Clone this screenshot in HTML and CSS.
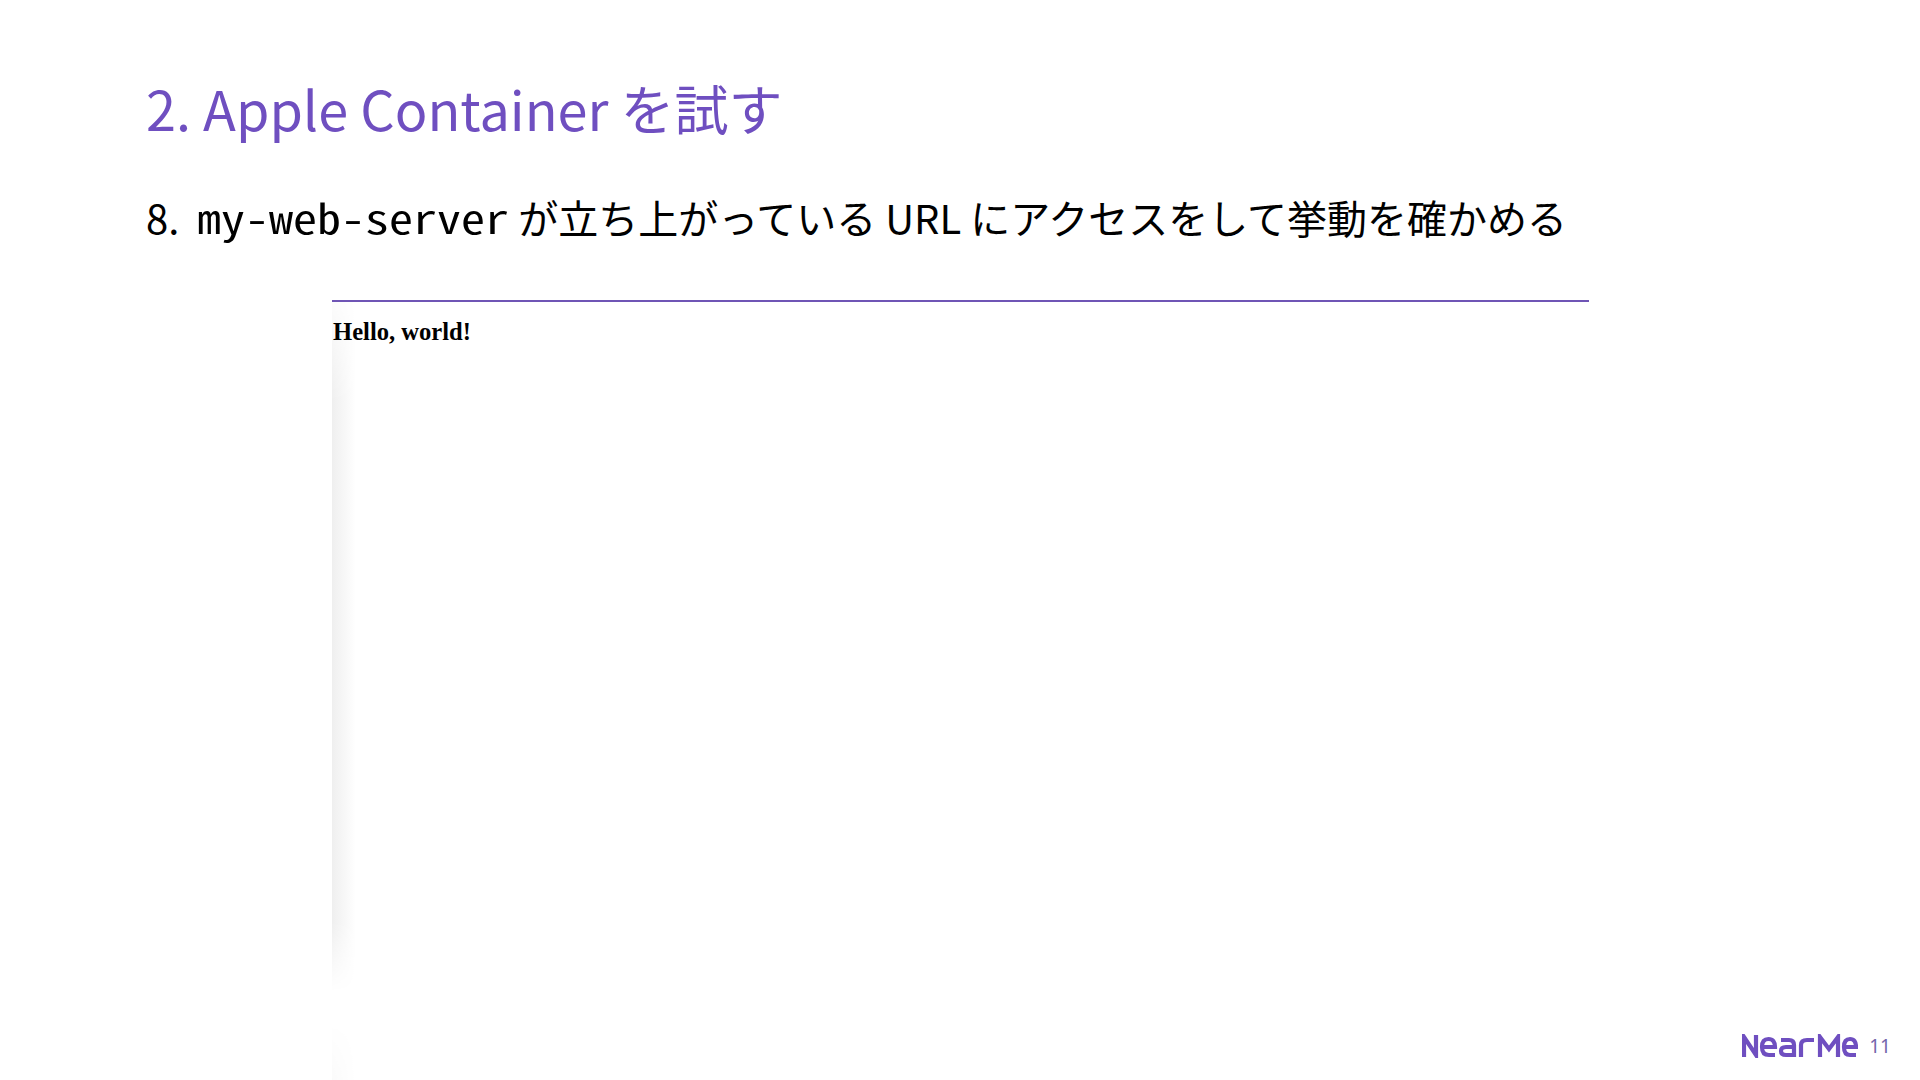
FILE: index.html
```html
<!DOCTYPE html>
<html lang="ja">
<head>
<meta charset="utf-8">
<title>Slide</title>
<link rel="stylesheet" href="styles.css">
</head>
<body>
<main class="slide">
  <h1 class="title">2. Apple Container を試す</h1>
  <p class="step"><span class="num">8.</span><code class="code">my-web-server</code> が立ち上がっている URL にアクセスをして挙動を確かめる</p>
  <section class="shot"><b class="hello">Hello, world!</b></section>
  <footer class="foot">
    <svg class="logo" width="116" height="24" viewBox="0 0 116 24" fill="none" stroke="#6f4fc0" stroke-width="4.200">
      <path d="M2 23V3L14 21V1"/>
      <path d="M20 13H33Q33 5 26.500 5Q20 5 20 13Q20 21 27 21H33"/>
      <path d="M39 6H47Q52 6 52 11V21H44Q39 21 39 17Q39 13 44 13H52"/>
      <path d="M59 23V11Q59 6 65 6H72"/>
      <path d="M78 23V3L87 15L96 3V23"/>
      <path d="M102 13H114Q114 5 108 5Q102 5 102 13Q102 21 108 21H114"/>
    </svg>
    <span class="page">11</span>
  </footer>
</main>
</body>
</html>
```
FILE: styles.css
```css
* { box-sizing: border-box; }
html, body { margin: 0; padding: 0; background: #fff; }
.slide {
  width: 1920px;
  height: 1080px;
  overflow: hidden;
  position: relative;
  padding: 73px 0 0 146px;
  font-family: "Noto Sans CJK JP", "Noto Sans", sans-serif;
}
.title {
  margin: 0;
  font-size: 54px;
  line-height: 70px;
  font-weight: 400;
  color: #6f4fc0;
}
.step {
  margin: 44px 0 0;
  font-size: 40px;
  line-height: 60px;
  color: #000;
  white-space: nowrap;
}
.num { margin-right: 18px; }
.code {
  display: inline-block;
  font-family: "Noto Sans Mono CJK JP", "DejaVu Sans Mono", monospace;
  font-size: 40px;
  margin-right: 52px;
  transform: scaleX(1.2);
  transform-origin: left center;
}
.shot {
  margin: 53px 0 0 186px;
  width: 1257px;
  height: 782px;
  border-top: 2px solid #6f55b5;
  padding: 16px 0 0 1px;
  position: relative;
}
.shot::before {
  content: "";
  position: absolute;
  left: 0;
  top: 0;
  bottom: 0;
  width: 24px;
  background: linear-gradient(to right, #efefef, #fff);
  -webkit-mask-image: linear-gradient(to bottom, rgba(0,0,0,.2) 0, #000 100px, #000 620px, transparent 690px, transparent 720px, rgba(0,0,0,.3) 780px);
}
.hello {
  position: relative;
  font-family: "Liberation Serif", serif;
  font-size: 24.6px;
  line-height: 28px;
  color: #000;
}
.foot {
  position: absolute;
  right: 29px;
  bottom: 22px;
  display: flex;
  align-items: center;
  gap: 11px;
}
.page { font-size: 19px; line-height: 24px; color: #7464ab; font-family: "Noto Sans", sans-serif; }
```
